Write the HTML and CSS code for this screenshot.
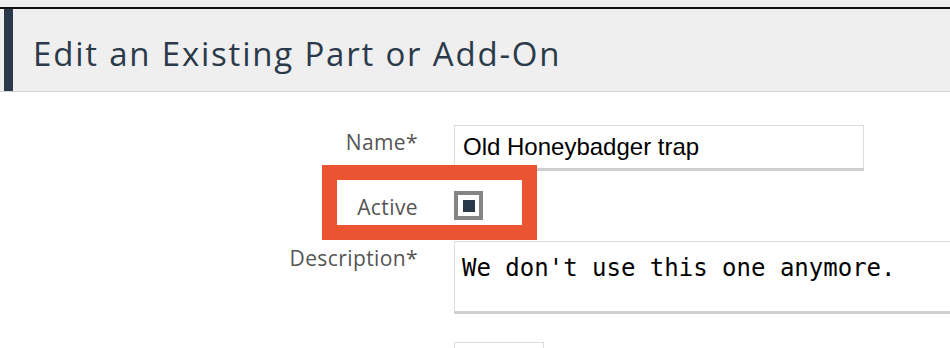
FILE: index.html
```html
<!DOCTYPE html>
<html lang="en">
<head>
    <meta charset="UTF-8">
    <title>Edit an Existing Part or Add-On</title>
    <link rel="stylesheet" href="styles.css">
</head>
<body>
    <div class="top-strip"></div>

    <div class="page-header">
        <div class="page-header-inner">
            <h1>Edit an Existing Part or Add-On</h1>
        </div>
    </div>

    <form class="part-form">
        <div class="field-row">
            <label class="field-label" for="partName">Name*</label>
            <input class="text-input" type="text" id="partName" value="Old Honeybadger trap">
        </div>

        <div class="field-row field-row-center">
            <div class="highlight"></div>
            <label class="field-label" for="partActive">Active</label>
            <span class="checkbox" id="partActive"><span class="checkbox-mark"></span></span>
        </div>

        <div class="field-row">
            <label class="field-label" for="partDesc">Description*</label>
            <textarea class="text-area" id="partDesc">We don't use this one anymore.</textarea>
        </div>

        <div class="field-row">
            <span class="field-label"></span>
            <input class="small-input" type="text">
        </div>
    </form>
</body>
</html>
```

FILE: styles.css
```css
:root {
    --navy: #2b3a4a;
    --header-bg: #efefef;
    --label-color: #555;
    --border-gray: #cfcfcf;
    --highlight: #ea5430;
}
body {
    margin: 0;
    font-family: 'Open Sans', sans-serif;
    background: #fff;
    overflow: hidden;
}
.top-strip {
    height: 7px;
    background: var(--header-bg);
    border-bottom: 2px solid #111;
}
.page-header {
    background: var(--header-bg);
    border-bottom: 1px solid #d4d4d4;
    padding-left: 4px;
}
.page-header-inner {
    border-left: 9px solid var(--navy);
    height: 82px;
    padding-left: 20px;
    box-sizing: border-box;
    padding-top: 25px;
}
h1 {
    margin: 0;
    font-size: 33px;
    line-height: 40px;
    letter-spacing: 1.8px;
    font-weight: 400;
    color: var(--navy);
}
.part-form {
    padding-top: 33px;
    display: flex;
    flex-direction: column;
}
.field-row {
    position: relative;
    display: grid;
    grid-template-columns: 418px 1fr;
    column-gap: 36px;
    align-items: start;
    margin-bottom: 20px;
}
.field-row:nth-child(2) {
    margin-bottom: 21px;
}
.field-row:nth-child(3) {
    margin-bottom: 28px;
}
.field-row-center {
    align-items: center;
}
.field-label {
    text-align: right;
    font-size: 21px;
    line-height: 26px;
    letter-spacing: 0.4px;
    color: var(--label-color);
    padding-top: 4px;
}
.field-row-center .field-label {
    padding-top: 2px;
}
.text-input {
    width: 410px;
    height: 46px;
    box-sizing: border-box;
    border: 1px solid #dcdcdc;
    border-bottom: 3px solid var(--border-gray);
    padding: 0 8px;
    font-family: 'Liberation Sans', Arial, sans-serif;
    font-size: 24px;
    color: #000;
    outline: none;
}
.text-area {
    width: 520px;
    height: 73px;
    box-sizing: border-box;
    border: 1px solid #dcdcdc;
    border-bottom: 3px solid var(--border-gray);
    padding: 12px 7px 0;
    font-family: 'DejaVu Sans Mono', monospace;
    font-size: 24px;
    color: #000;
    resize: none;
    outline: none;
    overflow: hidden;
}
.small-input {
    width: 90px;
    height: 40px;
    box-sizing: border-box;
    border: 1px solid #dcdcdc;
    outline: none;
}
.checkbox {
    width: 29px;
    height: 29px;
    box-sizing: border-box;
    border: 4px solid #858585;
    background: #fff;
    display: flex;
    align-items: center;
    justify-content: center;
}
.checkbox-mark {
    width: 12px;
    height: 12px;
    background: var(--navy);
}
.highlight {
    position: absolute;
    left: 322px;
    top: -26px;
    width: 215px;
    height: 75px;
    box-sizing: border-box;
    border: 15px solid var(--highlight);
    pointer-events: none;
    z-index: 2;
}
```
